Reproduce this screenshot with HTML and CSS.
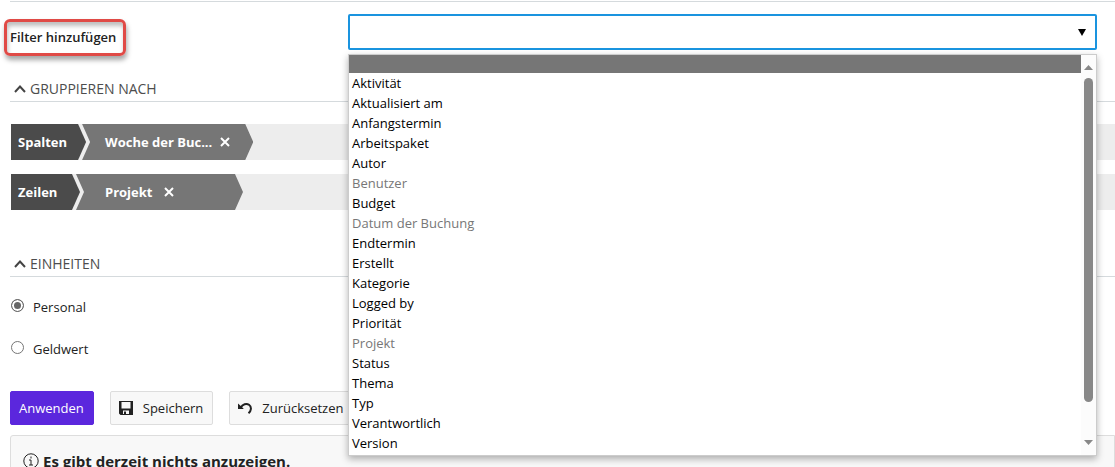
FILE: index.html
```html
<!DOCTYPE html>
<html lang="de">
<head>
<meta charset="utf-8">
<title>Kostenbericht</title>
<link rel="stylesheet" href="styles.css">
</head>
<body>
<main class="page">
  <section class="filters">
    <label class="filter-label" for="add-filter"><span class="callout">Filter hinzufügen</span></label>
    <div class="picker">
      <select class="picker-select" id="add-filter"><option></option></select>
      <svg class="picker-arrow" viewBox="0 0 8 7" aria-hidden="true"><path d="M0 0h8L4 7z"/></svg>
      <div class="menu">
        <ul class="menu-list" role="listbox" aria-label="Filter hinzufügen">
          <li class="blank" role="option" aria-selected="true"></li>
          <li role="option">Aktivität</li>
          <li role="option">Aktualisiert am</li>
          <li role="option">Anfangstermin</li>
          <li role="option">Arbeitspaket</li>
          <li role="option">Autor</li>
          <li class="disabled" role="option" aria-disabled="true">Benutzer</li>
          <li role="option">Budget</li>
          <li class="disabled" role="option" aria-disabled="true">Datum der Buchung</li>
          <li role="option">Endtermin</li>
          <li role="option">Erstellt</li>
          <li role="option">Kategorie</li>
          <li role="option">Logged by</li>
          <li role="option">Priorität</li>
          <li class="disabled" role="option" aria-disabled="true">Projekt</li>
          <li role="option">Status</li>
          <li role="option">Thema</li>
          <li role="option">Typ</li>
          <li role="option">Verantwortlich</li>
          <li role="option">Version</li>
        </ul>
        <div class="scrollbar" aria-hidden="true">
          <svg class="scroll-arrow" viewBox="0 0 9 5"><path d="M0 5h9L4.500 0z"/></svg>
          <span class="scroll-thumb"></span>
          <svg class="scroll-arrow" viewBox="0 0 9 5"><path d="M0 0h9L4.500 5z"/></svg>
        </div>
      </div>
    </div>
  </section>

  <section class="group">
    <h2 class="heading"><svg class="caret" viewBox="0 0 12 8" aria-hidden="true"><path d="M1 7l5-5.500L11 7"/></svg>GRUPPIEREN NACH</h2>
    <div class="lanes">
      <div class="lane">
        <span class="lane-name">Spalten</span>
        <span class="chip">
          <span class="chip-text">Woche der Buc...</span>
          <button class="chip-remove" type="button" aria-label="Woche der Buchung entfernen"><svg viewBox="0 0 10 10"><path d="M1 1l8 8M9 1L1 9"/></svg></button>
        </span>
      </div>
      <div class="lane">
        <span class="lane-name">Zeilen</span>
        <span class="chip chip-short">
          <span class="chip-text">Projekt</span>
          <button class="chip-remove" type="button" aria-label="Projekt entfernen"><svg viewBox="0 0 10 10"><path d="M1 1l8 8M9 1L1 9"/></svg></button>
        </span>
      </div>
    </div>
  </section>

  <section class="units">
    <h2 class="heading"><svg class="caret" viewBox="0 0 12 8" aria-hidden="true"><path d="M1 7l5-5.500L11 7"/></svg>EINHEITEN</h2>
    <div class="radios">
      <div class="radio-row"><input class="radio" type="radio" name="unit" id="unit-staff" checked><label for="unit-staff">Personal</label></div>
      <div class="radio-row"><input class="radio" type="radio" name="unit" id="unit-money"><label for="unit-money">Geldwert</label></div>
    </div>
  </section>

  <div class="actions">
    <button class="button primary" type="button">Anwenden</button>
    <button class="button" type="button"><svg class="icon" viewBox="0 0 14 14" aria-hidden="true"><path fill-rule="evenodd" d="M0 0h14v14H1.500L0 12.500zM2.500 1v6.500h9V1zM4 9.500V13h6V9.500zM5 10.500h2V13H5z"/></svg>Speichern</button>
    <button class="button" type="button"><svg class="icon" viewBox="0 0 14 14" aria-hidden="true"><path d="M0 2.500V8h5.800L3.900 6.100z"/><path class="stroke" d="M2.800 6.500C4.500 3.200 8.500 2 11 3.800c2.900 2.200 2.400 6-.5 8.400"/></svg>Zurücksetzen</button>
  </div>

  <div class="notice"><svg class="info" viewBox="0 0 16 16" aria-hidden="true"><circle cx="8" cy="8" r="7.200"/><path d="M8 3.500v2M6 7h2v5M6 12h4"/></svg>Es gibt derzeit nichts anzuzeigen.</div>
</main>
</body>
</html>
```
FILE: styles.css
```css
* { box-sizing: border-box; }
html { overflow: hidden; }
body {
  margin: 0;
  overflow: hidden;
  background: #fff;
  color: #222;
  font: 13px/20px "Open Sans", "Noto Sans", sans-serif;
}
button, select { font: inherit; }
.page { padding: 1px 0 0 10px; }

.filters {
  display: grid;
  grid-template-columns: 338px 1fr;
  border-top: 1px solid #d5dadd;
  padding: 12px 18px 0 0;
}
.filter-label { display: flex; align-items: center; font-weight: 600; }
.callout {
  margin: 5px 0 0 -6px;
  padding: 5px 7px 6px 3px;
  border: 3px solid #e04a46;
  border-radius: 6px;
  box-shadow: 1px 4px 5px rgba(0, 0, 0, .35), inset 1px 4px 4px rgba(0, 0, 0, .25);
  white-space: nowrap;
}
.picker { position: relative; height: 36px; }
.picker-select {
  display: block;
  width: 100%;
  height: 100%;
  appearance: none;
  border: 2px solid #1a94df;
  border-radius: 2px;
  background: #fff;
  outline: 0;
}
.picker-arrow { position: absolute; right: 11px; top: 15px; width: 8px; height: 7px; }
.menu {
  position: absolute;
  z-index: 1;
  top: 40px;
  left: 0;
  right: 0;
  display: flex;
  height: 402px;
  border: 1px solid #ccc;
  background: #fff;
  color: #000;
  box-shadow: 0 3px 7px rgba(0, 0, 0, .3);
}
.menu-list { flex: 1; margin: 0; padding: 0; list-style: none; }
.menu-list li { height: 20px; padding: 0 3px; }
.menu-list .blank { height: 18px; background: #767676; }
.menu-list .disabled { color: #777; }
.scrollbar {
  display: flex;
  flex-direction: column;
  align-items: center;
  width: 15px;
  padding: 10px 0;
  background: #fcfcfc;
}
.scroll-arrow { width: 9px; height: 5px; fill: #888; }
.scroll-thumb { width: 9px; height: 324px; margin: 8px 0 auto; border-radius: 5px; background: #888; }

.heading {
  display: flex;
  align-items: center;
  gap: 4px;
  margin: 0;
  padding: 0 0 2px 4px;
  border-bottom: 1px solid #d5dadd;
  color: #4d4d4d;
  font-size: 14px;
  font-weight: 400;
}
.caret { width: 12px; height: 8px; fill: none; stroke: #444; stroke-width: 2; }
.group { padding-top: 23px; }
.lanes { display: grid; gap: 14px; padding: 22px 0 0 1px; }
.lane { display: flex; height: 36px; background: #ededed; color: #fff; font-weight: 700; line-height: 36px; }
.lane-name {
  min-width: 69px;
  padding: 0 19px 0 7px;
  background: #4b4b4b;
  clip-path: polygon(0 0, calc(100% - 8px) 0, 100% 50%, calc(100% - 8px) 100%, 0 100%);
}
.chip {
  display: flex;
  align-items: center;
  gap: 8px;
  min-width: 167px;
  margin-left: -4px;
  padding: 0 23px;
  background: #767676;
  clip-path: polygon(0 0, calc(100% - 8px) 0, 100% 50%, calc(100% - 8px) 100%, 0 100%, 8px 50%);
}
.chip-short { gap: 12px; padding: 0 29px; }
.chip-text { white-space: nowrap; }
.chip-remove { display: flex; padding: 0; border: 0; background: none; }
.chip-remove svg { width: 10px; height: 10px; fill: none; stroke: #fff; stroke-width: 2; }

.units { padding-top: 44px; }
.radios { display: grid; gap: 22px; padding-top: 20px; }
.radio-row { display: flex; align-items: center; gap: 9px; }
.radio {
  width: 13px;
  height: 13px;
  margin: 0 0 3px 1px;
  appearance: none;
  border: 1px solid #767676;
  border-radius: 50%;
  background: #fff;
}
.radio:checked { border-color: #666; background: #666; box-shadow: inset 0 0 0 2px #fff; }

.actions { display: flex; gap: 16px; padding-top: 32px; }
.button {
  display: flex;
  align-items: center;
  gap: 10px;
  height: 34px;
  padding: 0 9px 0 8px;
  border: 1px solid #ddd;
  border-radius: 2px;
  background: #f8f8f8;
  color: #222;
}
.primary { border-color: #5b27dd; background: #5b27dd; color: #fff; }
.icon { width: 14px; height: 14px; fill: #222; }
.stroke { fill: none; stroke: #222; stroke-width: 2; }
.notice {
  display: flex;
  align-items: center;
  gap: 4px;
  margin-top: 10px;
  padding: 15px 12px;
  border: 1px solid #ddd;
  border-radius: 3px 0 0 3px;
  background: #f8f8f8;
  font-size: 15px;
  font-weight: 700;
}
.info { width: 16px; height: 16px; fill: none; stroke: #222; stroke-width: 1; }
```
